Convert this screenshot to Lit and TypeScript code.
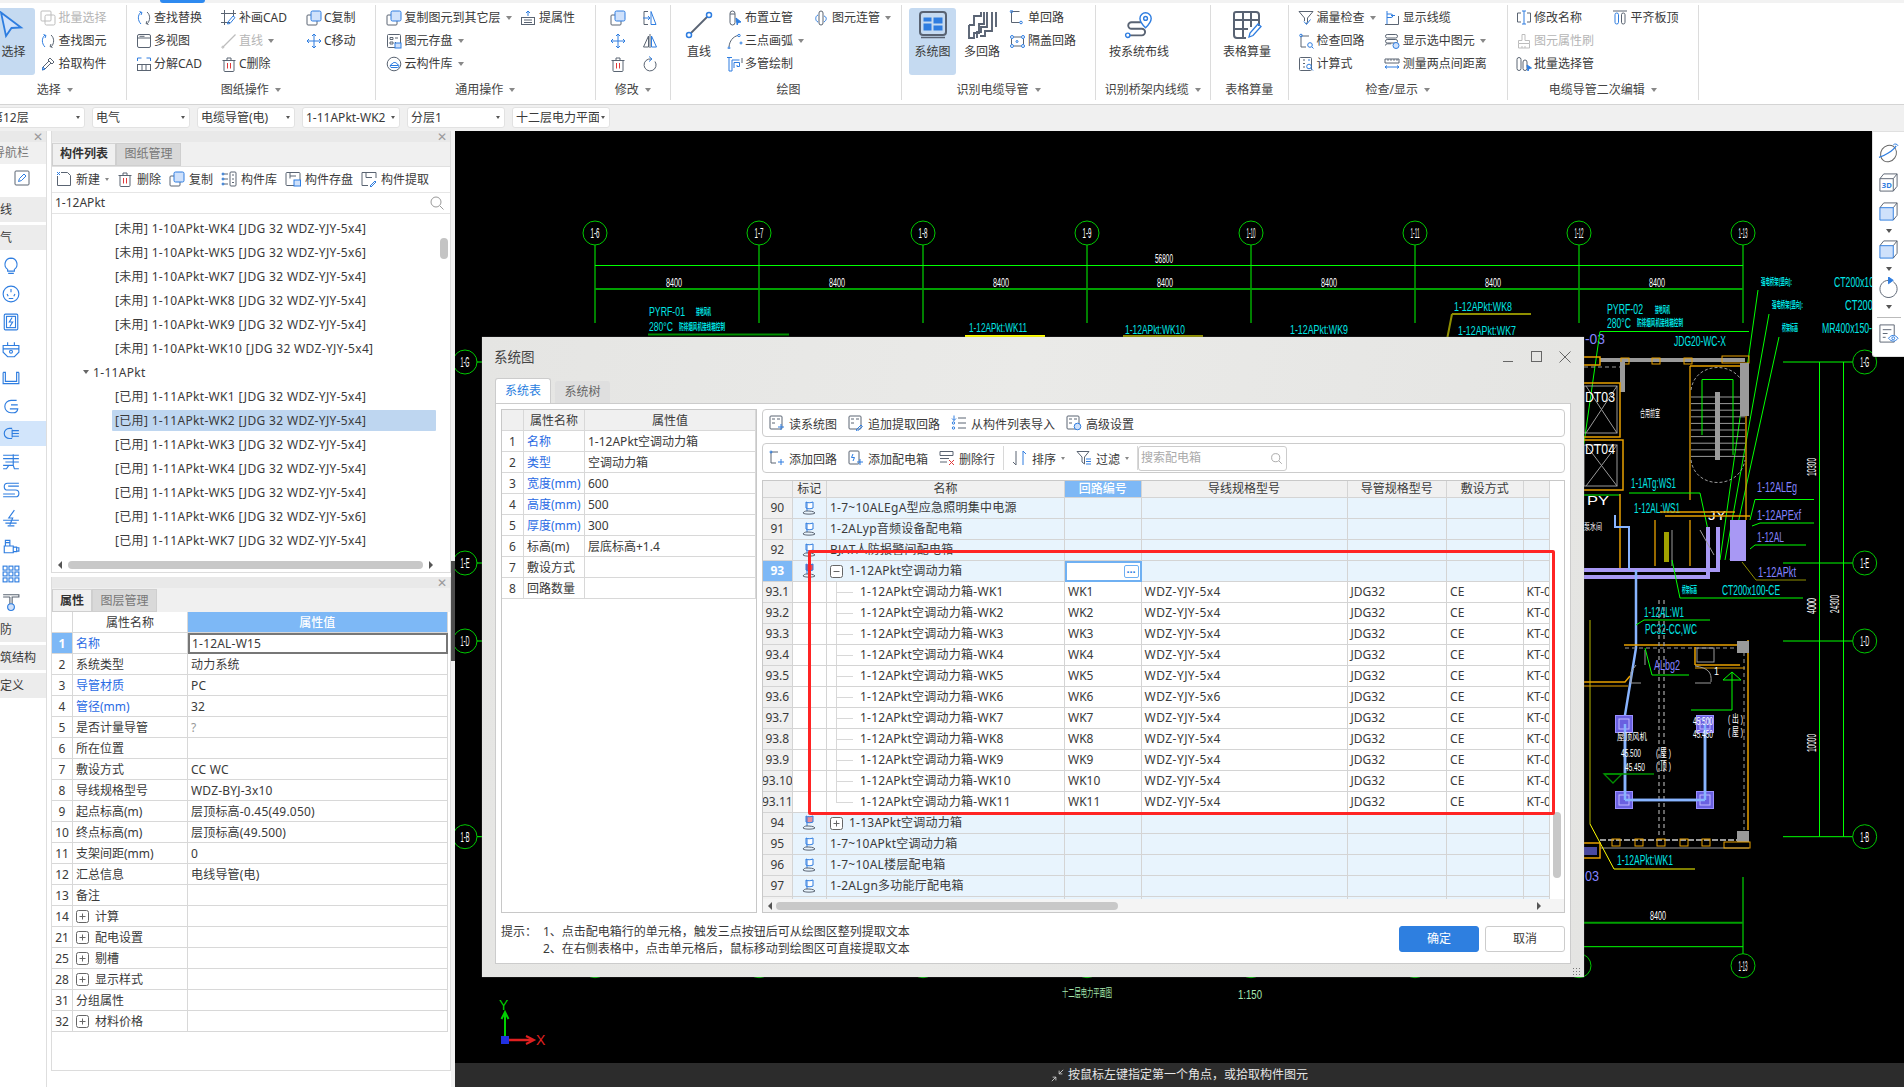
import { LitElement, html, css, svg } from "lit";
import { customElement } from "lit/decorators.js";

const ic = (body: any, cls = "ic", vb = "0 0 16 16") => html`<svg class=${cls} viewBox=${vb}>${body}</svg>`;

const I: Record<string, any> = {
  copy: ic(svg`<rect x="1" y="5" width="10" height="10" rx="1"/><rect class="b f" x="5" y="1" width="10" height="10" rx="1.5"/>`),
  copyGray: ic(svg`<rect class="g" x="1" y="1" width="10" height="10" rx="1"/><rect class="g" x="5" y="5" width="10" height="10" rx="1.5"/>`),
  find: ic(svg`<path class="b" d="M5 2C1.5 5 1.5 10.500 5 14"/><path d="M11 2c3.500 3 3.500 8.500 0 12"/><path class="b" d="M3.500 1.500 6 2.500 5 5"/><path d="M12.500 14.500 10 13.500 11 11"/>`),
  view: ic(svg`<rect x="1.500" y="1.500" width="13" height="13" rx="1.500"/><path d="M1.500 5h13M3.500 3.300h5"/>`),
  split: ic(svg`<path class="b" d="M1.500 5V2h4M14.500 5V2h-4"/><rect x="1.500" y="8.500" width="13" height="6"/><path d="M6 8.500v6M10 8.500v6"/>`),
  patch: ic(svg`<path d="M0 3.500h15M3.500 0v15M0 12.500h9M12.500 0v6"/><path class="b" d="M7 12l5-6 2 1.500-5 6-2.500.5z"/>`),
  lineGray: ic(svg`<path class="g" d="M1.500 14.500l13-13" stroke-width="1.300"/><circle class="g" cx="1.800" cy="14.200" r="1"/>`),
  trash: ic(svg`<path d="M3 4.500h10v10a1 1 0 0 1-1 1H4a1 1 0 0 1-1-1zM1.500 4.500h13M6 4.500V2h4v2.500"/><path class="r" d="M6.500 7v5.500M9.500 7v5.500"/>`),
  move: ic(svg`<path class="b" d="M8 1v14M1 8h14M6 3l2-2 2 2M6 13l2 2 2-2M3 6 1 8l2 2M13 6l2 2-2 2"/>`),
  pick: ic(svg`<path d="M10 2l4 4-2 2-4-4zM9 5 3 11l-.5 3 2.500-1 6-6"/><path class="b" d="M3 11l-.5 3 2.500-1z"/>`),
  save: ic(svg`<rect x="1.500" y="1.500" width="13" height="13" rx="1"/><path d="M4 4.500h3v2H4zM4 9h3v2H4zM9 5h3M9 9.500h1"/><rect class="b f" x="9" y="10" width="6" height="5"/>`),
  cloud: ic(svg`<circle cx="8" cy="8" r="6.800"/><path class="b" d="M5 11.500h6.500a1.500 1.500 0 0 0 0-3A3 3 0 0 0 6 8a2 2 0 0 0-1 3.500zM4 9.500h8"/>`),
  lift: ic(svg`<rect x="1.500" y="7.500" width="13" height="7"/><path d="M4 10h8M4 12.500h8"/><path class="b" d="M8 6V1M6 3l2-2 2 2"/>`),
  flip: ic(svg`<path d="M6 1.500H2v13h4"/><path class="b" d="M9 1.500l5 13H9zM1 8h7M6 6l2 2-2 2"/>`),
  mirror: ic(svg`<path d="M6.500 3 1.500 14h5zM8 1v14"/><path class="b" d="M9.500 3l5 11h-5z"/>`),
  rot: ic(svg`<path d="M13 5.500a6 6 0 1 1-4-2.500"/><path class="b" d="M7 .5 10 3 7 5.500"/>`),
  riser: ic(svg`<rect x="3" y="1" width="5" height="14" rx="2.500"/><path d="M3 4h5"/><path class="bs" d="M9 8l5 4-3 .5-.8 2.500z"/>`),
  arc: ic(svg`<path d="M2 14C2.500 8 6 3.500 11 2.500"/><circle class="b" cx="12" cy="2.500" r="1.200"/><circle class="b" cx="14" cy="10" r="1"/><circle class="b" cx="2" cy="15" r="1"/>`),
  multi: ic(svg`<path class="b" d="M0 1.500h5M2 1.500V15h3V4h7.500M5 1.500"/><path class="b" d="M7 12V6.500h5.500v4h-2.500V9"/><path d="M15 2v5"/>`),
  conn: ic(svg`<rect x="5" y="1" width="4" height="14" rx="2"/><path class="b" d="M4 5C1 6 1 11 4 12M10 6c3 1 3 4 0 6"/>`),
  single: ic(svg`<path d="M2.500 1.500v11h8"/><path d="M2.500 1.500h8"/><circle class="b" cx="2.500" cy="1.500" r="1.200"/><circle class="b" cx="12" cy="12.500" r="1.300"/>`),
  cover: ic(svg`<path d="M5 4h7M2.500 6v5M5 13h7M14.500 6v5"/><circle class="b" cx="3" cy="4" r="1.500"/><circle class="b" cx="14" cy="4" r="1.500"/><circle class="b" cx="3" cy="13" r="1.500"/><circle class="b" cx="14" cy="13" r="1.500"/><circle class="b" cx="8" cy="8.500" r="1"/>`),
  funnel: ic(svg`<path d="M1 1.500h14L9.500 8v4L8 14"/><path d="M1 1.500 6.500 8v3"/><path class="b" d="M6 11.500l2.500 3 4-5"/>`),
  showLine: ic(svg`<path class="b" d="M3 1v13.500M3 4h4a1.500 1.500 0 0 1 0 3.500H3M7 5.500h4"/><path d="M1 14.500h13.500V6"/>`),
  checkLoop: ic(svg`<path d="M3 3v11h5M3 3h8"/><circle class="b" cx="3" cy="2.500" r="1.300"/><circle class="b" cx="12" cy="12" r="2.300"/><path class="b" d="M14 14l1.500 1.500"/>`),
  showSel: ic(svg`<rect x="1.500" y="1.500" width="12" height="3.500" rx="1.700"/><rect x="1.500" y="6.500" width="12" height="3.500" rx="1.700"/><path d="M1.500 12.500a1.700 1.700 0 0 1 1.700-1.700h4"/><circle class="b f" cx="12" cy="12.500" r="3"/>`),
  calc: ic(svg`<rect x="1.500" y="1.500" width="12" height="13" rx="1"/><path d="M5 4h2M5 7.500h2M5 11h2"/><circle class="b" cx="11" cy="10.500" r="2.300"/><path class="b" d="M13 12.500l2 2M10 4h2"/>`),
  measure: ic(svg`<path d="M1 3h14v4H1zM4 3v1.800M7 3v1.800M10 3v1.800M13 3v1.800"/><path class="b" d="M1 11h14M3 9.500 1 11l2 1.500M13 9.500l2 1.500-2 1.500"/>`),
  rename: ic(svg`<path d="M5 3H1.500v9H5M11 3h3.500v9H11"/><path class="b" d="M8 1v13M6 1h4M6 14h4"/>`),
  flush: ic(svg`<path d="M1 1h14"/><rect class="b" x="3" y="3" width="3.500" height="11" rx="1.700"/><rect x="9.500" y="3" width="3.500" height="11" rx="1.700"/>`),
  brushGray: ic(svg`<path class="g" d="M6 1.500h3v6h4.500v3h-11v-3H6zM2.500 10.500v4.500h11v-4.500M6 15v-2M9 15v-2"/>`),
  pipes: ic(svg`<rect x="1" y="1.500" width="4" height="13" rx="2"/><rect x="7" y="4" width="4" height="10.500" rx="2"/><path class="bs" d="M11 9l4.500 3-2.500.5-1 2.500z"/>`),
  newDoc: ic(svg`<path d="M5 1.500h6.500l3 3v10H1.500V5"/><path class="b" d="M1 1l3 3M4 1 1 4"/>`),
  lib: ic(svg`<rect x="9" y="1" width="6" height="14" rx="1"/><path d="M11 4h2M11 8h2M11 11.500h2M1 3h6M1 8h6M1 13h6"/><circle class="b" cx="2" cy="3" r="1"/><circle class="b" cx="2" cy="8" r="1"/><circle class="b" cx="2" cy="13" r="1"/>`),
  store: ic(svg`<rect x="1" y="1.500" width="14" height="13" rx="1"/><path d="M5 1.500v6M5 5h6"/><rect class="b f" x="9" y="9" width="6.500" height="6"/>`),
  extract: ic(svg`<path d="M15 7V1.500H1v13h6M5 1.500v5h6"/><path class="b" d="M9 15l5-5 1 1-5 5z"/>`),
  mag: ic(svg`<circle class="g2" cx="7" cy="7" r="5"/><path class="g2" d="M11 11l3.500 3.500"/>`),
  edit: ic(svg`<rect x="1" y="1" width="14" height="14" rx="1"/><path class="b" d="M4.500 11.500l1-3L10 4l2 2-4.500 4.500z"/>`),
  sysRead: ic(svg`<rect x="1" y="1" width="12" height="13" rx="1"/><path d="M3 4h3M8 4h3M3 8h3"/><path class="b" d="M12 9v6M9 12h6"/>`),
  sysAdd: ic(svg`<rect x="1" y="1" width="12" height="13" rx="1"/><path d="M3 4h3M8 4h3M3 8h3"/><path class="b" d="M8 15l5-5 1.500 1.500-5 4.500z"/>`),
  fromList: ic(svg`<path d="M7 3h8M7 8h8M7 13h8"/><path class="b" d="M3 .5v5M1 3.500l2 2 2-2"/><circle class="b" cx="2.500" cy="8" r="1.200"/><circle class="b" cx="2.500" cy="13" r="1.200"/>`),
  adv: ic(svg`<rect x="1" y="1" width="12" height="13" rx="1"/><path d="M3 4h3M8 4h3M3 8h3"/><circle class="b f" cx="11.500" cy="11.500" r="3.300"/>`),
  addLoop: ic(svg`<path d="M2 2v11h5M2 2h7"/><circle class="b" cx="2" cy="2" r="1"/><path class="b" d="M12 9v6M9 12h6"/>`),
  addBox: ic(svg`<rect x="1" y="1" width="10" height="13" rx="1"/><path class="b" d="M5 4 3.500 7.500h3L5 11M12 9v6M9 12h6"/>`),
  delRow: ic(svg`<path d="M1 1.500h13v4H1zM1 8.500h9M1 12h7"/><path class="r" d="M10 10l5 5M15 10l-5 5"/>`),
  sort: ic(svg`<path d="M4 1v14M1 12l3 3"/><path class="b" d="M11 15V1l3 3"/>`, "ic"),
  filter: ic(svg`<path d="M1 1.500h12L8.500 7v7L6 12V7z"/><path class="b" d="M10 9h5M10 11.500h5M10 14h5"/>`),
  shrink: ic(svg`<path class="w" d="M1 15l5-5M2 10h4v4M15 1l-5 5M10 2v4h4"/>`),
  bulb: ic(svg`<path class="b" d="M8 1a5.500 5.500 0 0 0-3 10v1.500h6V11A5.500 5.500 0 0 0 8 1zM5.500 14.500h5"/>`),
  socket: ic(svg`<circle class="b" cx="8" cy="8" r="7"/><path class="b" d="M8 3.500v3M4.500 8l1 2M11.500 8l-1 2M6 12h4"/>`),
  panel: ic(svg`<rect class="b" x="2" y="1" width="12" height="14" rx="1"/><rect class="b" x="4" y="3" width="8" height="10"/><path class="b" d="M9 4 6.500 8h3L7 12"/>`),
  plug: ic(svg`<path class="b" d="M1 4h14v6l-4 4H5l-4-4zM5 1v3M11 1v3M1 7h14"/><circle class="b" cx="8" cy="9.500" r="1.300"/>`),
  tray: ic(svg`<path class="b" d="M1 3v10h14V3M1 3h2v8h10V3h2" />`),
  bend: ic(svg`<path class="b" d="M13 3H8a5.500 5.500 0 1 0 0 11h2a4 4 0 0 0 4-3.500H7M8 7h6"/>`),
  cable: ic(svg`<path class="b" d="M9 3H6.500a4.500 4.500 0 0 0 0 9H9M9 4v7M9 5h6M9 7.500h6M9 10h6"/>`),
  conduit: ic(svg`<path class="b" d="M1 2h14M1 5h14M3 8h12M1 11h8M1 14h3l2-3h4l1 3h4M10 1v10"/>`),
  snake: ic(svg`<path class="b" d="M15 2H5a3 3 0 0 0 0 6h7a3 3 0 0 1 0 6H1M15 4.500H5.500M1 11.500h10.500"/>`),
  bolt: ic(svg`<path class="b" d="M11 1 6 8h3.500L7 14M1 10h14M3 12.500h10M5 15h6"/>`),
  valve: ic(svg`<path class="b" d="M2 8h8v6H2zM3 3h4v5H3zM10 9h3v4h-3zM13 9.500h2v3h-2zM3 5h4"/>`),
  grid9: ic(svg`<g class="b"><rect x="1" y="1" width="3.500" height="3.500"/><rect x="6.200" y="1" width="3.500" height="3.500"/><rect x="11.500" y="1" width="3.500" height="3.500"/><rect x="1" y="6.200" width="3.500" height="3.500"/><rect x="6.200" y="6.200" width="3.500" height="3.500"/><rect x="11.500" y="6.200" width="3.500" height="3.500"/><rect x="1" y="11.500" width="3.500" height="3.500"/><rect x="6.200" y="11.500" width="3.500" height="3.500"/><rect x="11.500" y="11.500" width="3.500" height="3.500"/></g>`),
  tee: ic(svg`<path d="M1 1.500h14v2h-6v7M7 3.500H1M7 3.500v7"/><circle class="b f" cx="8" cy="12.500" r="3"/>`),
  flag: ic(svg`<path class="b f2" d="M5 2c2 1 4 1 7 0v6c-3 1-5 1-7 0z"/><path class="b" d="M6 2v9"/><path d="M2 13c1-1.500 2-2 4-2s7 0 8 2c-1 1.500-11 1.500-12 0z"/>`),
  flagR: ic(svg`<path class="rf" d="M5 1c2 1 4 1 7 0v6c-3 1-5 1-7 0z"/><path class="b" d="M6 2v9"/><path d="M2 13c1-1.500 2-2 4-2s7 0 8 2c-1 1.500-11 1.500-12 0z"/>`),
  flagP: ic(svg`<path class="pf" d="M5 1c2 1 4 1 7 0v6c-3 1-5 1-7 0z"/><path class="b" d="M6 2v9"/><path d="M2 13c1-1.500 2-2 4-2s7 0 8 2c-1 1.500-11 1.500-12 0z"/>`),
  pointer: ic(svg`<path class="b f" d="M1 1.500 21 16.500 11.500 17 6 25z" stroke-width="1.800"/>`, "bigic", "0 0 28 28"),
  lineBig: ic(svg`<path d="M5 23 23 5" stroke-width="1.800"/><circle class="b" cx="4" cy="24" r="2.500" stroke-width="1.500" fill="#fff"/><circle class="b" cx="24" cy="4" r="2.500" stroke-width="1.500" fill="#fff"/>`, "bigic", "0 0 28 28"),
  sysBig: ic(svg`<rect x="2" y="1" width="26" height="23" rx="3" stroke-width="2"/><path d="M3 27h24" stroke-width="1.500" transform="translate(0 -.5)"/><rect class="bs" x="6" y="7" width="7" height="3"/><rect class="bs" x="6" y="13" width="7" height="6"/><rect class="bs" x="16" y="7" width="8" height="5"/><rect class="bs" x="16" y="15" width="8" height="4"/>`, "bigic", "0 0 30 28"),
  multiBig: ic(svg`<path d="M2 14h5V5h7V1M2 14v13h5v-5h5v-9h5V1M20 1v15h-6v5h-4v6M25 1v19h-7v5h-5M29 1v15" stroke-width="1.900"/>`, "bigic", "0 0 30 28"),
  routeBig: ic(svg`<path d="M4 25h15a3.500 3.500 0 0 0 0-7H8a3.500 3.500 0 0 1 0-7h10" stroke-width="2"/><circle class="b" cx="4" cy="25" r="2.300" stroke-width="1.500" fill="#fff"/><path class="b" d="M23 1a6 6 0 0 0-6 6c0 4 6 10 6 10s6-6 6-10a6 6 0 0 0-6-6z" stroke-width="1.500"/><circle class="b" cx="23" cy="7" r="2" stroke-width="1.500"/>`, "bigic", "0 0 32 28"),
  tableBig: ic(svg`<path d="M14 27H5a3 3 0 0 1-3-3V3a2 2 0 0 1 2-2h20a3 3 0 0 1 3 3v11M2 9h25M2 18h14M11 1v26M19 1v15" stroke-width="2"/><path class="b" d="M17 26l1-4 8-9 3 2.500-8 9z" stroke-width="1.300"/>`, "bigic", "0 0 30 28"),
  plus: html`<svg class="box" viewBox="0 0 13 13"><rect x=".5" y=".5" width="12" height="12" rx="2"/><path d="M3.500 6.500h6M6.500 3.500v6"/></svg>`,
  minus: html`<svg class="box" viewBox="0 0 13 13"><rect x=".5" y=".5" width="12" height="12" rx="2"/><path d="M3.500 6.500h6"/></svg>`,
};

type Item = [string, string] | [string, string, string];
const item = (it: Item) => {
  const flags = it[2] || "";
  return html`<div class="it ${flags.includes("g") ? "dis" : ""}">${I[it[0]] || html`<span class="ic"></span>`}${it[1] ? html`<span class="itx">${it[1]}</span>` : ""}${flags.includes("a") ? html`<i class="tri"></i>` : ""}</div>`;
};
const col = (w: number, items: Item[], ml = 0) => html`<div class="col" style="width:${w}px;margin-left:${ml}px">${items.map(item)}</div>`;
const big = (w: number, icon: string, text: string, sel = false, ml = 0) =>
  html`<div class="big ${sel ? "sel" : ""}" style="width:${w}px;margin-left:${ml}px">${I[icon]}<span>${text}</span></div>`;

const groups = [
  { w: 126.5, pad: 0, label: "选择", arrow: true, shift: -16, body: () => [big(43, "pointer", "选择", true, -8), col(80, [["copyGray", "批量选择", "g"], ["find", "查找图元"], ["pick", "拾取构件"]], 5)] },
  { w: 249.5, pad: 9, label: "图纸操作", arrow: true, shift: 0, body: () => [col(85, [["find", "查找替换"], ["view", "多视图"], ["split", "分解CAD"]]), col(85, [["patch", "补画CAD"], ["lineGray", "直线", "ga"], ["trash", "C删除"]]), col(60, [["copy", "C复制"], ["move", "C移动"]])] },
  { w: 219.5, pad: 10, label: "通用操作", arrow: true, shift: 0, body: () => [col(134.4, [["copy", "复制图元到其它层", "a"], ["save", "图元存盘", "a"], ["cloud", "云构件库", "a"]]), col(60, [["lift", "提属性"]])] },
  { w: 75.5, pad: 14, label: "修改", arrow: true, shift: 0, body: () => [col(32, [["copy", ""], ["move", ""], ["trash", ""]]), col(20, [["flip", ""], ["mirror", ""], ["rot", ""]])] },
  { w: 231, pad: 5, label: "绘图", arrow: false, shift: 5, body: () => [big(46, "lineBig", "直线"), col(87, [["riser", "布置立管"], ["arc", "三点画弧", "a"], ["multi", "多管绘制"]], 4.5), col(85, [["conn", "图元连管", "a"]])] },
  { w: 194, pad: 7, label: "识别电缆导管", arrow: true, shift: 0, body: () => [big(47, "sysBig", "系统图", true), big(48, "multiBig", "多回路", false, 2), col(80, [["single", "单回路"], ["cover", "隔盖回路"]], 3.400)] },
  { w: 114.6, pad: 12, label: "识别桥架内线缆", arrow: true, shift: 0, body: () => [big(62, "routeBig", "按系统布线")] },
  { w: 78.4, pad: 6.400, label: "表格算量", arrow: false, shift: 0, body: () => [big(60, "tableBig", "表格算量")] },
  { w: 218.6, pad: 9, label: "检查/显示", arrow: true, shift: 0, body: () => [col(86.300, [["funnel", "漏量检查", "a"], ["checkLoop", "检查回路"], ["calc", "计算式"]]), col(120, [["showLine", "显示线缆"], ["showSel", "显示选中图元", "a"], ["measure", "测量两点间距离"]])] },
  { w: 191.400, pad: 8, label: "电缆导管二次编辑", arrow: true, shift: 0, body: () => [col(96.500, [["rename", "修改名称"], ["brushGray", "图元属性刷", "g"], ["pipes", "批量选择管"]]), col(70, [["flush", "平齐板顶"]])] },
] as const;

const combos = [["第12层", 98, -13], ["电气", 98, 7], ["电缆导管(电)", 98, 7], ["1-11APkt-WK2", 98, 7], ["分层1", 98, 7], ["十二层电力平面", 98, 7]] as const;

const navRows: [string, string, boolean][] = [
  ["", "线", false], ["", "气", false], ["bulb", "", false], ["socket", "", false], ["panel", "", false], ["plug", "", false], ["tray", "", false], ["bend", "", false],
  ["cable", "", true], ["conduit", "", false], ["snake", "", false], ["bolt", "", false], ["valve", "", false], ["grid9", "", false], ["tee", "", false],
  ["", "防", false], ["", "筑结构", false], ["", "定义", false],
];

const listItems = [
  "[未用] 1-10APkt-WK4 [JDG 32 WDZ-YJY-5x4]", "[未用] 1-10APkt-WK5 [JDG 32 WDZ-YJY-5x6]", "[未用] 1-10APkt-WK7 [JDG 32 WDZ-YJY-5x4]",
  "[未用] 1-10APkt-WK8 [JDG 32 WDZ-YJY-5x4]", "[未用] 1-10APkt-WK9 [JDG 32 WDZ-YJY-5x4]", "[未用] 1-10APkt-WK10 [JDG 32 WDZ-YJY-5x4]", "#1-11APkt",
  "[已用] 1-11APkt-WK1 [JDG 32 WDZ-YJY-5x4]", "[已用] 1-11APkt-WK2 [JDG 32 WDZ-YJY-5x4]", "[已用] 1-11APkt-WK3 [JDG 32 WDZ-YJY-5x4]",
  "[已用] 1-11APkt-WK4 [JDG 32 WDZ-YJY-5x4]", "[已用] 1-11APkt-WK5 [JDG 32 WDZ-YJY-5x4]", "[已用] 1-11APkt-WK6 [JDG 32 WDZ-YJY-5x6]", "[已用] 1-11APkt-WK7 [JDG 32 WDZ-YJY-5x4]",
];

const props: [number, string, string, string?][] = [
  [1, "名称", "1-12AL-W15", "l"], [2, "系统类型", "动力系统"], [3, "导管材质", "PC", "l"], [4, "管径(mm)", "32", "l"], [5, "是否计量导管", "?", "q"], [6, "所在位置", ""],
  [7, "敷设方式", "CC WC"], [8, "导线规格型号", "WDZ-BYJ-3x10"], [9, "起点标高(m)", "层顶标高-0.45(49.050)"], [10, "终点标高(m)", "层顶标高(49.500)"], [11, "支架间距(mm)", "0"],
  [12, "汇总信息", "电线导管(电)"], [13, "备注", ""], [14, "计算", "", "p"], [21, "配电设置", "", "p"], [25, "剔槽", "", "p"], [28, "显示样式", "", "p"], [31, "分组属性", ""], [32, "材料价格", "", "p"],
];

const sysProps: [number, string, string, boolean][] = [
  [1, "名称", "1-12APkt空调动力箱", true], [2, "类型", "空调动力箱", true], [3, "宽度(mm)", "600", true], [4, "高度(mm)", "500", true], [5, "厚度(mm)", "300", true],
  [6, "标高(m)", "层底标高+1.4", false], [7, "敷设方式", "", false], [8, "回路数量", "", false],
];

const parents1 = [["90", "1-7~10ALEgA型应急照明集中电源"], ["91", "1-2ALyp音频设备配电箱"], ["92", "BJAT人防报警间配电箱"]];
const parents2 = [["95", "1-7~10APkt空调动力箱"], ["96", "1-7~10AL楼层配电箱"], ["97", "1-2ALgn多功能厅配电箱"]];
const children = Array.from({ length: 11 }, (_, i) => i + 1);

const T = (x: number, y: number, s: string, w: number, c = "#fff", size = 13) =>
  svg`<text x=${x} y=${y} fill=${c} font-size=${size} textLength=${w} lengthAdjust="spacingAndGlyphs">${s}</text>`;
const B = (x: number, y: number, s: string, w: number) =>
  svg`<text x=${x} y=${y} fill="#00e6e6" font-size="9" font-weight="700" textLength=${w} lengthAdjust="spacingAndGlyphs">${s}</text>`;
const L = (d: string, c: string, sw = 1, extra = "") => svg`<path d=${d} stroke=${c} stroke-width=${sw} fill="none" stroke-dasharray=${extra}/>`;
const bubble = (x: number, y: number, s: string) => svg`<circle cx=${x} cy=${y} r="12" stroke="#00c800" stroke-width="1" fill="#000"/><text x=${x} y=${y + 5} fill="#fff" font-size="14" text-anchor="middle" textLength="9" lengthAdjust="spacingAndGlyphs">${s}</text>`;
const rot = (x: number, y: number, s: string, w: number) => svg`<text transform="translate(${x} ${y}) rotate(-90)" fill="#fff" font-size="12" text-anchor="middle" textLength=${w} lengthAdjust="spacingAndGlyphs">${s}</text>`;
const square = (x: number, y: number) => svg`<rect x=${x - 8.500} y=${y - 8.500} width="17" height="17" fill="#6a60e0" stroke="#9a90ff"/><rect x=${x - 5} y=${y - 5} width="10" height="10" fill="none" stroke="#c0b8ff"/>`;

const axesX = [595, 759, 923, 1087, 1251, 1415, 1579, 1743];
const GR = "#00ff00", DG = "#009000", OR = "#e8a000", CY = "#00e6e6", PU = "#8484ff", GY = "#9a9a9a", YE = "#ffff00", OL = "#8f8f00", BL = "#88b4ff", LA = "#a898f4";

function drawing() {
  const stairs = Array.from({ length: 10 }, (_, i) => 397 + i * 6.600);
  return svg`
    ${axesX.map((x, i) => svg`${L(`M${x} 245V323`, GR)}${bubble(x, 233, "1-" + (6 + i))}${L(`M${x} 877V954`, GR)}${bubble(x, 965.700, "1-" + (6 + i))}`)}
    ${L("M595 265.500H1743", GR)}${L("M595 289H1743", "#00a000", 2)}
    ${T(1155, 263, "56800", 18, "#fff", 12)}
    ${[674, 837, 1001, 1165, 1329, 1493, 1657].map((x) => T(x - 8, 287, "8400", 16, "#fff", 12))}
    ${T(649, 316, "PYRF-01", 36, CY)}${B(696, 315, "接地风机", 15)}
    ${T(649, 331, "280°C", 24, CY)}${B(679, 330, "防排烟风机接线箱控制", 46)}
    ${L("M648 334.500H789", DG, 2)}
    ${T(969, 332, "1-12APkt:WK11", 58, CY)}${L("M965 336H1045", YE, 2)}
    ${T(1125, 334, "1-12APkt:WK10", 60, CY)}${L("M1123 336H1203", OL, 2)}
    ${T(1290, 334, "1-12APkt:WK9", 58, CY)}
    ${T(1454, 311, "1-12APkt:WK8", 58, CY)}${L("M1452 314H1531M1452 314L1441 370", OL, 2)}
    ${T(1458, 335, "1-12APkt:WK7", 58, CY)}
    ${T(905, 348, "KT-03", 36, PU, 15)}${T(1068, 348, "KT-03", 36, PU, 15)}${T(1236, 348, "KT-03", 36, PU, 15)}${T(1400, 348, "KT-04", 36, PU, 15)}
    ${T(1607, 314, "PYRF-02", 36, CY, 14)}${B(1655, 313, "接地风机", 15)}
    ${T(1607, 328, "280°C", 24, CY, 14)}${B(1637, 326, "防排烟风机接线箱控制", 46)}
    ${T(1585, 344, "-03", 20, PU, 15)}
    ${T(1674, 346, "JDG20-WC-X", 52, CY, 14)}
    ${L("M1600 331.500H1749M1600 331.500L1583 450", GR)}
    ${B(1761, 285, "强电桥架(竖向):", 31)}${B(1772, 308, "强电桥架(竖向):", 31)}${B(1782, 331, "桥架标高", 16)}
    ${T(1834, 287, "CT200x10", 40, CY, 14)}${T(1845, 310, "CT200", 28, CY, 14)}${T(1822, 333, "MR400x150-", 50, CY, 14)}
    ${L("M1758 290 1720 560M1769 314 1725 560M1779 337 1730 560", GR)}
    ${L("M1600 360H1745", GY, 4)}${L("M1584 357H1600V365H1584", OR, 1.500)}
    ${[1625, 1656, 1688].map((x) => svg`<rect x=${x - 4} y="358" width="8" height="6" fill="none" stroke=${OR}/>`)}
    <rect x="1722" y="356" width="27" height="7" fill="none" stroke="${OR}"/>
    <rect x="1620" y="362" width="5" height="30" fill="${GY}"/>
    ${L("M1584 367H1620", GY, 1, "4 3")}
    ${L("M1584 383H1620V437H1584M1584 440H1623V490H1584", OR, 1.500)}
    ${L("M1586 386L1617 433M1617 386L1586 433M1586 445L1617 486M1617 445L1586 486", GY)}
    <rect x="1584" y="386" width="33" height="47" fill="none" stroke="${GY}"/><rect x="1584" y="445" width="33" height="41" fill="none" stroke="${GY}"/>
    ${T(1585, 402, "DT03", 30, "#fff", 14)}${T(1585, 454, "DT04", 30, "#fff", 14)}
    ${T(1640, 417, "合用前室", 20, "#fff", 10)}
    ${L("M1690 366V500M1746 366V520M1690 366H1746", OR, 1.300)}
    ${stairs.map((y) => L(`M1691 ${y}H1745`, GY))}
    <rect x="1715" y="392" width="5" height="68" fill="${GY}"/>
    ${L("M1691 390C1695 360 1740 360 1745 390", GY, 1, "3 2")}${L("M1691 460C1695 490 1740 490 1745 460", GY, 1, "3 2")}
    ${L("M1702 435V379.500H1733V455", GR)}
    <rect x="1740" y="363" width="9" height="53" fill="${GY}"/>
    ${L("M1629 493H1700L1708 530M1584 495H1620", GR)}
    ${T(1631, 488, "1-1ATg:WS1", 45, CY, 14)}
    ${T(1634, 513, "1-12AL:WS1", 46, CY, 14)}
    ${T(1587, 505, "PY", 22, "#fff", 13)}${T(1584, 530, "泵水间", 18, "#fff", 9)}
    ${T(1708, 520, "JY", 18, "#fff", 13)}
    ${T(1757, 492, "1-12ALEg", 40, PU, 14)}${L("M1750 520L1755 499.500H1814", GR)}
    ${T(1757, 520, "1-12APExf", 44, PU, 14)}${L("M1752 526L1760 523H1814", GR)}
    ${T(1757, 542, "1-12AL", 27, PU, 14)}${L("M1750 549 1755 545H1806", GR)}
    ${T(1758, 577, "1-12APkt", 38, PU, 14)}${L("M1742 562 1756 580H1806", OL)}
    ${L("M1620 494V570M1665 516H1750M1660 512H1735", OR, 1.500)}
    ${L("M1655 520V566M1690 520V566", OR, 1.300)}
    <rect x="1730" y="520" width="16" height="41" fill="${LA}"/>
    ${L("M1584 570H1718V527", LA, 4)}${L("M1584 577H1708V527", LA, 4)}
    ${L("M1615 515V527H1629V570", BL, 2)}
    ${L("M1636 570V648L1625 715V800H1705V723", BL, 2.500)}
    ${L("M1672 530V566M1700 530L1714 555", GY)}
    <rect x="1664" y="532" width="5" height="30" fill="#a0a000"/>
    ${B(1682, 593, "桥架标高", 15)}
    ${T(1722, 595, "CT200x100-CE", 58, CY, 14)}${L("M1672 560L1680 598H1803", GR)}
    ${T(1644, 617, "1-12AL:W1", 40, CY, 14)}${L("M1636 625 1644 620H1710", GR)}
    ${T(1645, 634, "PC32-CC,WC", 52, CY, 14)}
    ${L("M1590 620V824", OL, 1.300)}
    ${L("M1624 645H1745", OR, 1.500)}${L("M1625 648H1745", GY, 1, "4 3")}
    ${L("M1748 640V830", OR, 1.500)}${L("M1744 645V830", GY, 1, "4 3")}
    <rect x="1737" y="641" width="12" height="12" fill="${GY}"/><rect x="1737" y="831" width="12" height="11" fill="${GY}"/>
    ${L("M1659 600V838M1664 600V838", GY, 1.300, "4 3")}
    ${L("M1600 840H1737", GY, 2, "6 2")}${L("M1600 848H1749", GY)}
    ${[1616, 1639, 1661, 1684, 1706].map((x) => svg`<rect x=${x - 4} y="839" width="8" height="7" fill="none" stroke=${OR}/>`)}
    <rect x="1724" y="842" width="26" height="6" fill="none" stroke="${OR}"/>
    ${L("M1584 843H1600V858H1584", OR, 1.500)}<rect x="1584" y="847" width="13" height="8" fill="#4a4aa0"/>
    ${square(1624, 724)}${square(1705, 724)}${square(1624, 800)}${square(1705, 800)}
    ${L("M1625 800H1705M1625 724V800M1705 724V800", BL, 2.500)}
    ${T(1617, 740, "屋顶风机", 30, "#fff", 9)}
    ${T(1621, 757, "45.500", 20, "#fff", 11)}${T(1625, 771, "45.450", 20, "#fff", 11)}
    ${T(1693, 725, "45.500", 20, "#fff", 11)}${T(1693, 738, "45.450", 20, "#fff", 11)}
    ${T(1656, 757, "( 屋 )", 15, "#fff", 11)}${T(1656, 770, "( 顶 )", 15, "#fff", 11)}
    ${T(1728, 723, "( 出 )", 15, "#fff", 11)}${T(1728, 736, "( 屋 )", 15, "#fff", 11)}
    ${L("M1604 774H1654", DG, 1.300)}${L("M1604 774H1622L1613 783z", DG, 1.300)}
    ${L("M1691 710H1732V672M1723 680H1741L1732 672z", GR)}
    ${L("M1645 650V665", GY)}${L("M1645 648L1652 675H1689", GR)}
    ${T(1654, 670, "ALbg2", 26, PU, 14)}
    ${L("M1695 647V665M1695 665H1740", OR, 1.500)}${L("M1695 668H1745", OR)}
    <rect x="1697" y="648" width="17" height="14" fill="none" stroke="${GY}"/>
    ${L("M1695 666C1708 668 1712 672 1711 682", GY)}${L("M1695 683H1711", GY)}
    ${T(1714, 675, "1", 5, "#fff", 11)}
    ${L("M1584 682H1625L1630 676", OR, 1.500)}${L("M1584 686H1628", OR)}
    ${L("M1636 665 1631 672V683H1641", GY)}
    ${L("M1590 824 1614 869H1695", YE)}
    ${T(1617, 865, "1-12APkt:WK1", 56, CY, 14)}
    ${T(1585, 881, "03", 14, PU, 15)}
    ${T(1650, 920, "8400", 16, "#fff", 12)}
    ${L("M1584 922.700H1743", "#00a000", 2)}${L("M1584 946.700H1743", GR)}
    ${rot(1816, 467, "10300", 18)}${rot(1816, 606, "4000", 16)}${rot(1839, 604, "24300", 18)}${rot(1816, 743, "10000", 18)}
    ${L("M1783 362H1853M1783 563H1853M1783 641H1853M1783 836.700H1853", GR)}
    ${L("M1819.500 362V836.700M1843.500 362V836.700", GR)}
    ${bubble(1864.700, 362, "1-G")}${bubble(1864.700, 563, "1-E")}${bubble(1864.700, 641, "1-D")}${bubble(1864.700, 836.700, "1-B")}
    ${[["1-G", 362], ["1-E", 563], ["1-D", 641], ["1-B", 836.700]].map(([s, y]) => svg`${bubble(465, y as number, s as string)}${L(`M477 ${y}H500`, GR)}`)}
    ${T(1062, 997, "十二层电力平面图", 50, "#a8e8b0", 11)}
    ${T(1238, 999, "1:150", 24, "#a8e8b0", 13)}
    ${L("M505 1040V1014", "#00d000", 2)}${L("M501.500 1019 505 1012 508.500 1019", "#00d000", 2)}
    ${L("M505 1040H532", "#e02020", 2.500)}${L("M526 1036 534 1040 526 1044", "#e02020", 2)}
    <rect x="501" y="1036" width="8" height="8" fill="#2030e0"/>
    <text x="499" y="1010" fill="#00d000" font-size="14">Y</text>
    <text x="536" y="1045" fill="#e02020" font-size="14">X</text>
  `;
}

@customElement("app-root")
export class AppRoot extends LitElement {
  static styles = css`
    :host { display: block; width: 1904px; height: 1087px; overflow: hidden; position: relative; background: #fff; color: #3a3a3a;
      font: 12px/16px "Noto Sans", "Noto Sans CJK SC", sans-serif; }
    * { box-sizing: border-box; }
    .ic { width: 16px; height: 16px; flex: none; fill: none; stroke: #5a6472; stroke-width: 1; display: block; }
    .bigic { width: 30px; height: 28px; flex: none; fill: none; stroke: #596373; display: block; }
    svg .b { stroke: #2e7de0; }
    svg .f { fill: #cfe1fb; }
    svg .bs { fill: #2e7de0; stroke: #2e7de0; }
    svg .g { stroke: #bdbdbd; }
    svg .g2 { stroke: #999; }
    svg .r { stroke: #e03a3a; }
    svg .w { stroke: #ddd; }
    svg .f2 { fill: #fff; }
    svg .rf { fill: #e8505a; stroke: #2e7de0; }
    svg .pf { fill: #e8909a; stroke: #2e7de0; }
    .box { width: 13px; height: 13px; flex: none; fill: #fff; stroke: #666; }

    .ribbon { height: 104px; background: #fff; overflow: hidden; }
    .topstrip { height: 3px; background: #f2f2f2; padding-left: 160px; }
    .topstrip i { display: block; width: 45px; height: 3px; background: #2e8af0; border-radius: 0 0 6px 6px; }
    .groups { display: flex; margin-top: 2px; }
    .grp { height: 95px; border-right: 1px solid #dcdcdc; flex: none; display: flex; flex-direction: column; }
    .grp-body { height: 75px; display: flex; padding-top: 1px; }
    .grp-label { height: 21px; display: flex; align-items: center; justify-content: center; line-height: 20px; color: #444; margin-top: 1px; }
    .grp-label .tri { margin-left: 6px; }
    .col { display: flex; flex-direction: column; flex: none; }
    .it { height: 23px; display: flex; align-items: center; white-space: nowrap; }
    .itx { margin-left: 2.500px; }
    .it.dis { color: #b5b5b5; }
    .tri { width: 0; height: 0; border-left: 3.500px solid transparent; border-right: 3.500px solid transparent; border-top: 4px solid #888; margin-left: 4px; flex: none; }
    .it .tri { margin-left: 5px; }
    .big { height: 67px; margin-top: 2px; border-radius: 3px; flex: none; display: flex; flex-direction: column; align-items: center; padding-top: 3px; }
    .big span { margin-top: 5px; white-space: nowrap; }
    .big.sel { background: #c5daf1; }

    .combobar { height: 27px; background: #f0f0f0; border-top: 1px solid #d4d4d4; padding-top: 2px; display: flex; }
    .combo { height: 21px; background: #fff; border: 1px solid #e2e2e2; border-radius: 3px; display: flex; align-items: center; padding: 0 2px 0 3px; flex: none; line-height: 19px; }
    .combo span { flex: 1; overflow: hidden; white-space: nowrap; }
    .combo .tri { margin-left: 2px; border-left-width: 2.500px; border-right-width: 2.500px; border-top-width: 3px; border-top-color: #555; margin-right: 2px; }

    .main { height: 956px; display: flex; }
    .side { width: 455px; display: flex; background: #fff; flex: none; }
    .nav { width: 47px; border-right: 1px solid #dedede; overflow: hidden; flex: none; }
    .xrow { height: 11px; display: flex; justify-content: flex-end; align-items: center; padding-right: 3px; color: #999; background: #e9e9e9; font-size: 12px; line-height: 11px; }
    .navhead { height: 22px; background: #f0f0f0; padding-top: 3px; margin-left: 0; color: #777; white-space: nowrap; line-height: 16px; overflow: hidden; }
    .navhead span { display: block; margin-left: -7px; }
    .navtool { height: 26px; margin-top: 1px; display: flex; align-items: center; padding-left: 14px; }
    .navrows { padding-top: 6px; display: flex; flex-direction: column; gap: 3px; }
    .nr { height: 25px; display: flex; align-items: center; padding-left: 2px; white-space: nowrap; }
    .nr.t { background: #ececec; padding-left: 0; }
    .nr.s { background: #d2e5fb; }
    .nr .ic { width: 18px; height: 18px; }
    .panels { width: 400px; margin-left: 4px; display: flex; flex-direction: column; gap: 4px; flex: none; }
    .sash { width: 4px; background: #f2f2f2; flex: none; }
    .sash i { display: block; height: 100px; margin-top: 430px; background: #4e4e4e; }
    .panel { border: 1px solid #dcdcdc; border-top: none; display: flex; flex-direction: column; flex: none; }
    .p1 { height: 442px; background: #f0f0f0; }
    .p2 { height: 494px; background: #f0f0f0; }
    .tabs { height: 23px; display: flex; background: #f0f0f0; margin-top: 1px; }
    .tab { background: #d9d9d9; color: #777; border: 1px solid #cfcfcf; display: flex; align-items: center; justify-content: center; width: 65px; }
    .tab.on { background: #f0f0f0; color: #333; font-weight: 700; width: 64px; border-top: 1px solid #d4d4d4; }
    .tab.w40 { width: 40px; }
    .ptool { height: 27px; background: #fff; display: flex; align-items: center; padding-left: 4px; gap: 8px; border-bottom: 1px solid #e6e6e6; border-top: 1px solid #e0e0e0;}
    .ptool span { padding-top: 2px; }
    .ptool .tri { margin-left: 2px; }
    .ti { display: flex; align-items: center; gap: 4px; white-space: nowrap; flex: none; }
    .psearch { height: 21px; background: #fff; display: flex; align-items: center; justify-content: space-between; padding: 0 5px 0 3px; border-bottom: 1px solid #e4e4e4; }
    .listwrap { height: 344px; background: #fff; display: flex; overflow: hidden; }
    .list { width: 387px; padding-top: 4px; flex: none; letter-spacing: .33px; }
    .li { height: 21px; margin-bottom: 3px; margin-left: 60px; width: 324px; padding-left: 3px; line-height: 21px; white-space: nowrap; }
    .li.sel { background: #bed6f0; border-radius: 1px; }
    .li.node { display: flex; align-items: center; margin-left: 31px; padding-left: 0; gap: 4px; }
    .li.node .tri { margin: 0 0 0 0; border-top-color: #666; }
    .vs { width: 13px; flex: none; padding-top: 24px; padding-left: 1px; }
    .vs i { display: block; width: 8px; height: 21px; background: #c4c4c4; border-radius: 4px; }
    .hs { height: 15px; display: flex; align-items: center; background: #fff; flex: none; padding-left: 6px; }
    .al { width: 0; height: 0; border-top: 4px solid transparent; border-bottom: 4px solid transparent; border-right: 4px solid #555; flex: none; }
    .ar { width: 0; height: 0; border-top: 4px solid transparent; border-bottom: 4px solid transparent; border-left: 4px solid #555; flex: none; }
    .thumb { height: 8px; border-radius: 4px; background: #c8c8c8; flex: none; }

    .ptable { background: #fff; flex: 1; }
    .pr { display: grid; grid-template-columns: 21px 115px 259.500px; height: 21px; line-height: 20px; white-space: nowrap; }
    .pr > div { border-right: 1px solid #d8d8d8; border-bottom: 1px solid #d8d8d8; padding: 1px 0 0 3px; overflow: hidden; display: flex; align-items: center; gap: 6px; }
    .pr > div:first-child { justify-content: center; padding: 1px 0 0; }
    .pr > div:nth-child(3) { letter-spacing: .2px; }
    .pr.h > div { justify-content: center; padding: 1px 0 0; }
    .pr.h > div:nth-child(3) { background: #7db8f6; color: #fff; font-weight: 500; letter-spacing: 0; }
    .lnk { color: #2a6be4; }
    .pr .q { color: #999; }
    .pr .on1 { background: #7db8f6; color: #fff; font-weight: 700; }
    .pr .ed { border: 2px solid #777; padding: 0 0 0 2px; }

    .canvas { flex: 1; background: #000; display: flex; flex-direction: column; position: relative; min-width: 0; }
    .draw { flex: 1; min-height: 0; display: block; font-family: "Liberation Sans", "Noto Sans CJK SC", sans-serif; }
    .status { height: 24px; background: #2c2c2c; color: #e6e6e6; display: flex; align-items: center; justify-content: center; gap: 4px; flex: none; }
    .status .ic { width: 13px; height: 13px; }
    .rtool { position: absolute; left: 1417px; top: 0; width: 32px; height: 226px; background: #fff; border: 1px solid #e0e0e0; border-right: none; border-radius: 0 0 0 3px; display: flex; flex-direction: column; align-items: center; padding-top: 11px; }
    .rtool .ic { width: 21px; height: 21px; }
    .rtool .tri { margin: 6.500px 0; border-top-color: #555; }
    .rtool .gp { margin-top: 8px; display: block; }
    .rtool hr { width: 24px; border: none; border-top: 1px solid #bbb; margin: 1.500px 0 5px; }

    .dlg { position: absolute; left: 482px; top: 337px; width: 1102px; height: 640px; background: linear-gradient(100deg, #e5e5e3, #eaeae8 45%, #e4e4e2); display: flex; flex-direction: column; box-shadow: 0 0 1px #777; }
    .dtitle { height: 41px; display: flex; align-items: center; padding: 0 0 2px 12px; font-size: 13.500px; color: #444; flex: none; }
    .wc { margin-left: auto; display: flex; gap: 12px; padding-right: 11px; }
    .wc svg { width: 16px; height: 16px; fill: none; stroke: #666; display: block; }
    .dtabs { height: 25px; padding-left: 13px; display: flex; gap: 4px; align-items: flex-end; flex: none; }
    .dt { height: 22px; width: 55px; background: #dfdfdf; color: #666; display: flex; align-items: center; justify-content: center; border-radius: 3px 3px 0 0; }
    .dt.on { height: 25px; width: 56px; background: #fff; color: #2a80e0; border: 1px solid #ccc; border-bottom: none; }
    .dbody { flex: 1; min-height: 0; margin: 0 13px 13px; background: #fff; border: 1px solid #ccc; padding: 5px 5px 0; display: flex; flex-direction: column; }
    .dmain { display: flex; gap: 5px; height: 504px; flex: none; }
    .dleft { width: 256px; border: 1px solid #c8c8c8; flex: none; }
    .sr { display: grid; grid-template-columns: 22px 61px 1fr; height: 21px; line-height: 22px; white-space: nowrap; }
    .sr > div { border-right: 1px solid #d8d8d8; border-bottom: 1px solid #d8d8d8; padding-left: 3px; overflow: hidden; }
    .sr > div:first-child { text-align: center; padding: 0; background: #fff; }
    .sr.h > div { background: #f0f0f0; text-align: center; padding: 0; }
    .dright { width: 803px; display: flex; flex-direction: column; flex: none; }
    .tbar { background: #fff; border: 1px solid #ccc; border-radius: 4px; display: flex; align-items: center; padding-left: 6px; gap: 11px; flex: none; }
    .tbar.a { height: 28px; }
    .tbar.b { height: 30px; margin-top: 6px; }
    .tbar .ti span { padding-top: 4px; }
    .sep { width: 1px; height: 24px; background: #d8d8d8; flex: none; }
    .ti .tri { margin-left: 1px; border-left-width: 2.500px; border-right-width: 2.500px; border-top-width: 3px; }
    .tbar .ti { gap: 4px; }
    .sbox { width: 149px; height: 25px; border: 1px solid #ccc; border-radius: 3px; display: flex; align-items: center; justify-content: space-between; padding: 0 3px 0 2px; color: #aaa; margin-left: -8px; flex: none; }
    .sbox .ic { width: 13px; height: 13px; }
    .grid { height: 433px; margin-top: 7px; border: 1px solid #c8c8c8; flex: none; display: flex; flex-direction: column; }
    .gtop { height: 418px; display: flex; flex: none; overflow: hidden; }
    .gt { width: 787px; flex: none; overflow: hidden; }
    .gv { flex: 1; padding-left: 3px; padding-top: 331px; }
    .gv i { display: block; width: 8px; height: 66px; background: #c8c8c8; border-radius: 4px; }
    .gr { display: grid; grid-template-columns: 29.600px 34.400px 238px 76.600px 206px 99.500px 76.500px 26.400px; height: 21px; line-height: 20px; white-space: nowrap; }
    .gr > div { border-right: 1px solid #d4d4d4; border-bottom: 1px solid #d4d4d4; overflow: hidden; padding-left: 3px; display: flex; align-items: center; }
    .gr > div:first-child { background: #f0f0f0; justify-content: center; padding: 0; }
    .gr > div:nth-child(2) { justify-content: center; padding: 0; }
    .gr > div:nth-child(5) { letter-spacing: .45px; }
    .gr.h { height: 17px; line-height: 16px; }
    .gr.h > div { background: #f0f0f0; justify-content: center; padding: 0; letter-spacing: 0 !important; }
    .gr.h > div.hl { background: #7db8f6; color: #fff; font-weight: 500; }
    .gr.p > div { background: #e8f4fd; }
    .gr.p > div:first-child { background: #f0f0f0; }
    .gr .on1 { background: #7db8f6 !important; color: #fff; font-weight: 700; }
    .gr .name { gap: 6px; padding-left: 3px; letter-spacing: .25px; }
    .gr .focus { background: #fff !important; border: 2px solid #6fb0f2; justify-content: flex-end; padding: 0 1px 0 0; }
    .more { width: 15px; height: 13px; border: 1px solid #6fb0f2; border-radius: 2px; color: #2a80e0; display: flex; align-items: center; justify-content: center; font-size: 11px; line-height: 8px; letter-spacing: 0; font-weight: 700; }
    .tree { width: 22px; height: 21px; flex: none; position: relative; margin-left: 2px; }
    .tree::before { content: ""; position: absolute; left: 4px; top: -1px; bottom: 0; border-left: 1px solid #d8d8d8; }
    .tree::after { content: ""; position: absolute; left: 4px; top: 10px; width: 17px; border-top: 1px solid #d8d8d8; }
    .tree.last::before { bottom: 10px; }
    .ghs { height: 13px; background: #f4f4f4; display: flex; align-items: center; padding-left: 5px; flex: none; }
    .red { position: absolute; left: 326px; top: 213px; width: 747px; height: 265px; border: 3px solid #ff2424; border-radius: 2px; pointer-events: none; }
    .dfoot { display: flex; justify-content: space-between; padding: 10px 0 0; }
    .hint { display: grid; grid-template-columns: 42px auto; line-height: 17px; white-space: nowrap; }
    .btns { display: flex; gap: 6px; padding-top: 3px; }
    .btn { width: 80px; height: 26px; border-radius: 3px; display: flex; align-items: center; justify-content: center; background: #fff; border: 1px solid #ccc; }
    .btn.ok { background: #2e7fe0; border-color: #2e7fe0; color: #fff; }
    .grip { position: absolute; right: 3px; bottom: 1px; width: 9px; height: 9px; background-image: radial-gradient(#777 35%, transparent 40%); background-size: 3px 3px; }
  `;

  private renderRibbon() {
    return html`<div class="ribbon">
      <div class="topstrip"><i></i></div>
      <div class="groups">
        ${groups.map((g) => html`<div class="grp" style="width:${g.w}px">
          <div class="grp-body" style="padding-left:${g.pad}px">${g.body()}</div>
          <div class="grp-label" style="padding-left:${g.shift > 0 ? g.shift : 0}px;padding-right:${g.shift < 0 ? -g.shift : 0}px">${g.label}${g.arrow ? html`<i class="tri"></i>` : ""}</div>
        </div>`)}
      </div>
    </div>`;
  }

  private renderSide() {
    return html`<div class="side">
      <div class="nav">
        <div class="xrow">✕</div>
        <div class="navhead"><span>导航栏</span></div>
        <div class="navtool">${I.edit}</div>
        <div class="navrows">
          ${navRows.map(([icon, text, sel]) => html`<div class="nr ${text ? "t" : ""} ${sel ? "s" : ""}">${icon ? I[icon] : text}</div>`)}
        </div>
      </div>
      <div class="panels">
        <div class="panel p1">
          <div class="xrow">✕</div>
          <div class="tabs"><div class="tab on">构件列表</div><div class="tab">图纸管理</div></div>
          <div class="ptool">
            <div class="ti">${I.newDoc}<span>新建</span><i class="tri"></i></div>
            <div class="ti">${I.trash}<span>删除</span></div>
            <div class="ti">${I.copy}<span>复制</span></div>
            <div class="ti">${I.lib}<span>构件库</span></div>
            <div class="ti">${I.store}<span>构件存盘</span></div>
            <div class="ti">${I.extract}<span>构件提取</span></div>
          </div>
          <div class="psearch"><span>1-12APkt</span>${I.mag}</div>
          <div class="listwrap">
            <div class="list">
              ${listItems.map((t) => t.startsWith("#")
                ? html`<div class="li node"><i class="tri"></i><span>${t.slice(1)}</span></div>`
                : html`<div class="li ${t.includes("11APkt-WK2") ? "sel" : ""}">${t}</div>`)}
            </div>
            <div class="vs"><i></i></div>
          </div>
          <div class="hs"><i class="al"></i><i class="thumb" style="width:355px;margin-left:6px"></i><i class="ar" style="margin-left:6px"></i></div>
        </div>
        <div class="panel p2">
          <div class="xrow">✕</div>
          <div class="tabs"><div class="tab on w40">属性</div><div class="tab">图层管理</div></div>
          <div class="ptable">
            <div class="pr h"><div></div><div>属性名称</div><div>属性值</div></div>
            ${props.map(([n, name, val, k]) => html`<div class="pr">
              <div class=${n === 1 ? "on1" : ""}>${n}</div>
              <div class=${k === "l" ? "lnk" : ""}>${k === "p" ? I.plus : ""}${name}</div>
              <div class="${n === 1 ? "ed" : ""} ${k === "q" ? "q" : ""}">${val}</div>
            </div>`)}
          </div>
        </div>
      </div>
      <div class="sash"><i></i></div>
    </div>`;
  }

  private renderGridRow(idx: string, name: any, cells: string[], cls = "", mark: any = "", firstCls = "", focus = false) {
    return html`<div class="gr ${cls}">
      <div class=${firstCls}>${idx}</div><div>${mark}</div><div class="name">${name}</div>
      ${focus ? html`<div class="focus"><span class="more">···</span></div>` : html`<div>${cells[0] || ""}</div>`}
      <div>${cells[1] || ""}</div><div>${cells[2] || ""}</div><div>${cells[3] || ""}</div><div>${cells[4] || ""}</div>
    </div>`;
  }

  private renderDialog() {
    return html`<div class="dlg">
      <div class="dtitle">系统图
        <div class="wc">
          <svg viewBox="0 0 16 16"><path d="M2 12.500h10"/></svg>
          <svg viewBox="0 0 16 16"><rect x="2.500" y="2.500" width="10" height="10"/></svg>
          <svg viewBox="0 0 16 16"><path d="M2.500 2.500l11 11M13.500 2.500l-11 11"/></svg>
        </div>
      </div>
      <div class="dtabs"><div class="dt on">系统表</div><div class="dt">系统树</div></div>
      <div class="dbody">
        <div class="dmain">
          <div class="dleft">
            <div class="sr h"><div></div><div>属性名称</div><div>属性值</div></div>
            ${sysProps.map(([n, a, v, l]) => html`<div class="sr"><div>${n}</div><div class=${l ? "lnk" : ""}>${a}</div><div>${v}</div></div>`)}
          </div>
          <div class="dright">
            <div class="tbar a">
              <div class="ti">${I.sysRead}<span>读系统图</span></div>
              <div class="ti">${I.sysAdd}<span>追加提取回路</span></div>
              <div class="ti">${I.fromList}<span>从构件列表导入</span></div>
              <div class="ti">${I.adv}<span>高级设置</span></div>
            </div>
            <div class="tbar b">
              <div class="ti">${I.addLoop}<span>添加回路</span></div>
              <div class="ti">${I.addBox}<span>添加配电箱</span></div>
              <div class="ti">${I.delRow}<span>删除行</span></div>
              <div class="sep" style="margin:0 -3px"></div>
              <div class="ti">${I.sort}<span>排序</span><i class="tri"></i></div>
              <div class="ti">${I.filter}<span>过滤</span><i class="tri"></i></div>
              <div class="sep" style="margin:0 -3px"></div>
              <div class="sbox"><span>搜索配电箱</span>${I.mag}</div>
            </div>
            <div class="grid">
              <div class="gtop">
                <div class="gt">
                  <div class="gr h"><div></div><div>标记</div><div>名称</div><div class="hl">回路编号</div><div>导线规格型号</div><div>导管规格型号</div><div>敷设方式</div><div></div></div>
                  ${parents1.map(([i, n]) => this.renderGridRow(i, n, [], "p", I.flag))}
                  ${this.renderGridRow("93", html`${I.minus}<span>1-12APkt空调动力箱</span>`, [], "p", I.flagR, "on1", true)}
                  ${children.map((c) => this.renderGridRow("93." + c, html`<span class="tree ${c === 11 ? "last" : ""}"></span><span>1-12APkt空调动力箱-WK${c}</span>`,
                    ["WK" + c, "WDZ-YJY-5x" + (c === 6 ? 6 : 4), "JDG32", "CE", "KT-03"]))}
                  ${this.renderGridRow("94", html`${I.plus}<span>1-13APkt空调动力箱</span>`, [], "p", I.flagP)}
                  ${parents2.map(([i, n]) => this.renderGridRow(i, n, [], "p", I.flag))}
                  ${this.renderGridRow("", "", [], "p")}
                </div>
                <div class="gv"><i></i></div>
              </div>
              <div class="ghs"><i class="al"></i><i class="thumb" style="width:342px;margin-left:4px"></i><i class="ar" style="margin-left:419px"></i></div>
            </div>
          </div>
        </div>
        <div class="dfoot">
          <div class="hint"><span>提示：</span><span>1、点击配电箱行的单元格，触发三点按钮后可从绘图区整列提取文本</span><span></span><span>2、在右侧表格中，点击单元格后，鼠标移动到绘图区可直接提取文本</span></div>
          <div class="btns"><div class="btn ok">确定</div><div class="btn">取消</div></div>
        </div>
      </div>
      <div class="red"></div>
      <div class="grip"></div>
    </div>`;
  }

  render() {
    return html`
      ${this.renderRibbon()}
      <div class="combobar">
        ${combos.map(([t, w, ml]) => html`<div class="combo" style="width:${w}px;margin-left:${ml}px;"><span>${t}</span><i class="tri"></i></div>`)}
      </div>
      <div class="main">
        ${this.renderSide()}
        <div class="canvas">
          <svg class="draw" viewBox="455 131 1449 932">${drawing()}</svg>
          <div class="status">${I.shrink}<span>按鼠标左键指定第一个角点，或拾取构件图元</span></div>
          <div class="rtool">
            ${ic(svg`<ellipse cx="11" cy="11" rx="8" ry="9" stroke="#666" transform="rotate(35 11 11)"/><path class="b" d="M1 15C6 14 16 8 19 3" stroke-width="1.300"/><path class="b" d="M16 2a3 3 0 0 1 5 1"/>`, "ic", "0 0 22 22")}
            <span class="gp">${ic(svg`<path d="M2 7h14v13H2zM2 7l4-5h14v13l-4 5M16 7l4-5"/><text x="4" y="17" font-size="8" font-weight="700" fill="#2e7de0" stroke="none">3D</text>`, "ic", "0 0 22 22")}</span>
            <span class="gp">${ic(svg`<path class="f" d="M2 7h14v13H2z" stroke="#2e7de0"/><path d="M2 7l4-5h14v13l-4 5M16 7l4-5"/>`, "ic", "0 0 22 22")}</span>
            <i class="tri"></i>
            ${ic(svg`<path class="f" d="M2 7h14v13H2z" stroke="#2e7de0"/><path d="M2 7l4-5h14v13l-4 5M16 7l4-5"/>`, "ic", "0 0 22 22")}
            <i class="tri"></i>
            ${ic(svg`<path d="M16 5a9 9 0 1 1-5-1.500"/><path class="bs" d="M11 0l5 3.500-5 3.500z"/>`, "ic", "0 0 22 22")}
            <i class="tri"></i>
            <hr />
            ${ic(svg`<path d="M2 2h15v18H2zM5 7h9M5 11h5M5 15h3"/><path class="b" d="M11 16c3-4 7-4 10 0-3 4-7 4-10 0z" fill="#fff"/><circle class="b" cx="16" cy="16" r="1.500"/>`, "ic", "0 0 22 22")}
          </div>
        </div>
      </div>
      ${this.renderDialog()}
    `;
  }
}
